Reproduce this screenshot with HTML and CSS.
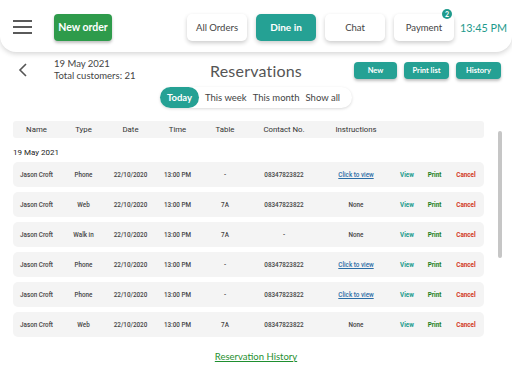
FILE: index.html
```html
<!DOCTYPE html>
<html lang="en">
<head>
<meta charset="UTF-8">
<meta name="viewport" content="width=device-width, initial-scale=1.0">
<title>Reservations</title>
<link rel="stylesheet" href="styles.css">
</head>
<body>

<header class="topbar">
  <div class="menu">
    <span></span><span></span><span></span>
  </div>
  <button class="btn-new-order">New order</button>
  <nav class="tabs">
    <button class="tab">All Orders</button>
    <button class="tab active">Dine in</button>
    <button class="tab">Chat</button>
    <button class="tab">Payment <span class="badge">2</span></button>
  </nav>
  <div class="clock">13:45 PM</div>
</header>

<section class="title-row">
  <div class="left">
    <svg class="back" width="10" height="14" viewBox="0 0 10 14">
      <path d="M8 1 L2 7 L8 13" fill="none" stroke="#555" stroke-width="1.6"/>
    </svg>
    <div class="summary">
      <div>19 May 2021</div>
      <div>Total customers: 21</div>
    </div>
  </div>
  <h1>Reservations</h1>
  <div class="actions">
    <button class="small-btn">New</button>
    <button class="small-btn">Print list</button>
    <button class="small-btn">History</button>
  </div>
</section>

<div class="filters">
  <div class="segmented">
    <span class="seg active">Today</span>
    <span class="seg">This week</span>
    <span class="seg">This month</span>
    <span class="seg">Show all</span>
  </div>
</div>

<main class="list-wrap">
  <div class="list">
    <div class="thead cols">
      <span>Name</span><span>Type</span><span>Date</span><span>Time</span><span>Table</span>
      <span>Contact No.</span><span>Instructions</span><span></span><span></span><span></span>
    </div>
    <div class="day">19 May 2021</div>
    <div id="rows"></div>
  </div>
  <div class="scroll"><div class="thumb"></div></div>
</main>

<footer class="foot">
  <a href="#">Reservation History</a>
</footer>

<script>
  // sample reservations
  var reservations = [
    { type: 'Phone', table: '-', contact: '08347823822', note: 'link' },
    { type: 'Web', table: '7A', contact: '08347823822', note: 'None' },
    { type: 'Walk in', table: '7A', contact: '-', note: 'None' },
    { type: 'Phone', table: '-', contact: '08347823822', note: 'link' },
    { type: 'Phone', table: '-', contact: '08347823822', note: 'link' },
    { type: 'Web', table: '7A', contact: '08347823822', note: 'None' }
  ];

  var rows = document.getElementById('rows');
  reservations.forEach(function(r) {
    var note = r.note === 'link' ? '<a class="view-link" href="#">Click to view</a>' : 'None';
    var row = document.createElement('div');
    row.className = 'row cols';
    row.innerHTML =
      '<span>Jason Croft</span>' +
      '<span>' + r.type + '</span>' +
      '<span>22/10/2020</span>' +
      '<span>13:00 PM</span>' +
      '<span>' + r.table + '</span>' +
      '<span>' + r.contact + '</span>' +
      '<span>' + note + '</span>' +
      '<span class="act view">View</span>' +
      '<span class="act print">Print</span>' +
      '<span class="act cancel">Cancel</span>';
    rows.appendChild(row);
  });
</script>

</body>
</html>
```

FILE: styles.css
```css
body {
  margin: 0;
  font-family: Lato, "Open Sans", sans-serif;
  background: #fff;
  color: #444;
  width: 512px;
  height: 384px;
  overflow: hidden;
}

button {
  font-family: inherit;
  border: none;
  cursor: pointer;
}

/* top bar */
.topbar {
  height: 52px;
  display: flex;
  align-items: center;
  padding: 2px 6px 0 13px;
  box-sizing: border-box;
  background: #fff;
  border-radius: 0 0 16px 16px;
  box-shadow: 0 2px 5px rgba(0, 0, 0, 0.16);
}

.menu {
  width: 19px;
  display: flex;
  flex-direction: column;
  gap: 4px;
}

.menu span {
  height: 2px;
  background: #5a5a5a;
}

.btn-new-order {
  margin-left: 22px;
  width: 58px;
  height: 27px;
  background: #2e9b4b;
  color: #fff;
  font-weight: bold;
  font-size: 10.5px;
  border-radius: 4px;
  box-shadow: 0 2px 3px rgba(0, 0, 0, 0.25);
  padding: 0;
}

.tabs {
  margin-left: auto;
  display: flex;
  gap: 9px;
}

.tab {
  position: relative;
  width: 60px;
  height: 27px;
  padding: 0;
  background: #fff;
  color: #444;
  font-size: 9.5px;
  border-radius: 5px;
  box-shadow: 0 2px 4px rgba(0, 0, 0, 0.2);
}

.tab.active {
  background: #25a194;
  color: #fff;
  font-weight: bold;
  font-size: 10px;
}

.badge {
  position: absolute;
  top: -5px;
  right: 2px;
  width: 10px;
  height: 10px;
  border-radius: 50%;
  background: #1e9a8c;
  color: #fff;
  font-size: 7px;
  font-weight: bold;
  line-height: 10px;
}

.clock {
  margin-left: 6px;
  width: 46px;
  color: #1e9a8c;
  font-size: 10.8px;
  white-space: nowrap;
}

/* title row */
.title-row {
  display: grid;
  grid-template-columns: 1fr auto 1fr;
  align-items: center;
  padding: 6px 11px 0 11px;
  height: 24px;
}

.left {
  display: flex;
  align-items: center;
}

.back {
  margin-left: 7px;
}

.summary {
  margin-left: 26px;
  font-size: 9.5px;
  line-height: 12px;
  color: #444;
}

h1 {
  margin: 0;
  font-size: 16px;
  font-weight: normal;
  color: #555;
  letter-spacing: 0.2px;
}

.actions {
  display: flex;
  justify-content: flex-end;
  gap: 7px;
}

.small-btn {
  height: 17px;
  padding: 0;
  background: #25a194;
  color: #fff;
  font-size: 7.5px;
  font-weight: bold;
  border-radius: 4px;
  box-shadow: 0 2px 3px rgba(0, 0, 0, 0.25);
}

.small-btn:nth-child(1) { width: 43px; }
.small-btn:nth-child(2) { width: 45px; }
.small-btn:nth-child(3) { width: 45px; }

/* filters */
.filters {
  display: flex;
  justify-content: center;
  padding-top: 5px;
}

.segmented {
  display: flex;
  align-items: center;
  height: 21px;
  padding-right: 9px;
  background: #fff;
  border-radius: 11px;
  box-shadow: 0 1px 3px rgba(0, 0, 0, 0.15);
  font-size: 9.5px;
  color: #444;
}

.seg {
  padding: 0 3px;
}

.seg.active {
  height: 21px;
  line-height: 21px;
  padding: 0 7px;
  margin-right: 3px;
  background: #25a194;
  color: #fff;
  font-weight: bold;
  border-radius: 11px;
}

/* table */
.list-wrap {
  display: flex;
  padding: 13px 0 0 13px;
}

.list {
  width: 471px;
  font-family: Roboto, sans-serif;
}

.scroll {
  margin-left: 14px;
  padding-top: 10px;
}

.thumb {
  width: 4px;
  height: 127px;
  border-radius: 2px;
  background: #c6c6c6;
}

.cols {
  display: grid;
  grid-template-columns: 47px 47px 47px 47px 48px 70px 74px 28px 27px 36px;
  align-items: center;
  text-align: center;
}

.thead {
  height: 17px;
  background: #f4f4f4;
  border-radius: 3px;
  font-size: 7.8px;
  color: #333;
}

.day {
  margin: 10px 0 5px;
  font-size: 8px;
  color: #222;
}

.row {
  height: 25px;
  margin-bottom: 5px;
  background: #f4f4f4;
  border-radius: 5px;
  font-size: 6.3px;
  color: #444;
  font-weight: 500;
}

.view-link {
  color: #2b6da6;
}

.act {
  font-weight: bold;
}

.view { color: #1a9b8d; }
.print { color: #1d7f1d; }
.cancel { color: #d2381b; }

/* footer */
.foot {
  text-align: center;
  padding-top: 2px;
}

.foot a {
  color: #1f8f30;
  font-size: 9.5px;
}
```
